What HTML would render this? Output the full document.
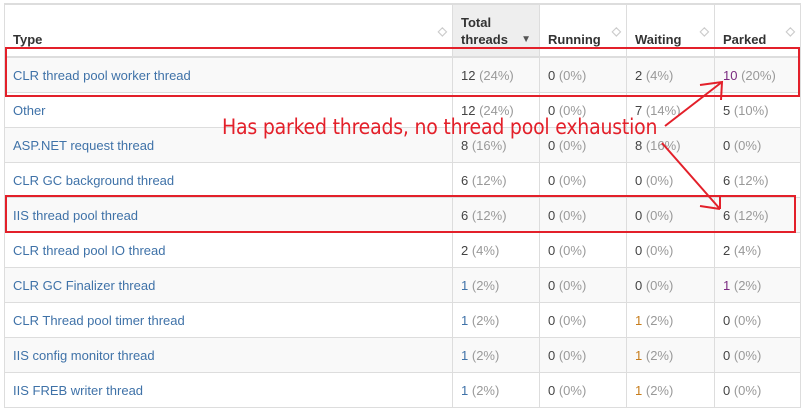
<!DOCTYPE html>
<html><head><style>
body{margin:0;width:807px;height:414px;background:#fff;font-family:"Liberation Sans",sans-serif;font-size:13px;position:relative;overflow:hidden}
table{position:absolute;left:4px;top:3px;border-collapse:collapse;width:797px;border:1px solid #ddd;border-top:2px solid #ddd}
th{height:43px;text-align:left;vertical-align:bottom;padding:0 8px 8px 8px;font-weight:bold;color:#333;border-left:1px solid #ddd;border-bottom:2px solid #ddd;background:#fff;position:relative;line-height:17px}
th.s{background:#eee}
th .ic{position:absolute;right:5px;top:22px;color:#ccc;font-size:12px;line-height:8px}
td{height:34px;padding:0 8px;border-left:1px solid #ddd;border-top:1px solid #ddd;color:#444}
tr.g td{background:#f9f9f9}
td a{color:#3f72a8}
.p{color:#999}
.b{color:#3f72a8}.o{color:#c77d1c}.v{color:#7a2b80}
.box{position:absolute;border:2px solid #e3202a}
.ann{position:absolute;left:222px;top:115px;color:#e3202a;font-size:21px;font-family:"DejaVu Sans Condensed","Liberation Sans",sans-serif;letter-spacing:-0.2px}
</style></head><body>
<table>
<tr><th style="width:431px;border-left:none">Type<span class="ic">◇</span></th><th class="s" style="width:70px">Total<br>threads<span style="position:absolute;right:8px;top:26px;color:#555;font-size:10px">▼</span></th><th style="width:70px">Running<span class="ic">◇</span></th><th style="width:71px">Waiting<span class="ic">◇</span></th><th>Parked<span class="ic">◇</span></th></tr>
<tr class="g"><td style="border-left:none"><a>CLR thread pool worker thread</a></td><td>12 <span class="p">(24%)</span></td><td>0 <span class="p">(0%)</span></td><td>2 <span class="p">(4%)</span></td><td><span class="v">10</span> <span class="p">(20%)</span></td></tr>
<tr><td style="border-left:none"><a>Other</a></td><td>12 <span class="p">(24%)</span></td><td>0 <span class="p">(0%)</span></td><td>7 <span class="p">(14%)</span></td><td>5 <span class="p">(10%)</span></td></tr>
<tr class="g"><td style="border-left:none"><a>ASP.NET request thread</a></td><td>8 <span class="p">(16%)</span></td><td>0 <span class="p">(0%)</span></td><td>8 <span class="p">(16%)</span></td><td>0 <span class="p">(0%)</span></td></tr>
<tr><td style="border-left:none"><a>CLR GC background thread</a></td><td>6 <span class="p">(12%)</span></td><td>0 <span class="p">(0%)</span></td><td>0 <span class="p">(0%)</span></td><td>6 <span class="p">(12%)</span></td></tr>
<tr class="g"><td style="border-left:none"><a>IIS thread pool thread</a></td><td>6 <span class="p">(12%)</span></td><td>0 <span class="p">(0%)</span></td><td>0 <span class="p">(0%)</span></td><td>6 <span class="p">(12%)</span></td></tr>
<tr><td style="border-left:none"><a>CLR thread pool IO thread</a></td><td>2 <span class="p">(4%)</span></td><td>0 <span class="p">(0%)</span></td><td>0 <span class="p">(0%)</span></td><td>2 <span class="p">(4%)</span></td></tr>
<tr class="g"><td style="border-left:none"><a>CLR GC Finalizer thread</a></td><td><span class="b">1</span> <span class="p">(2%)</span></td><td>0 <span class="p">(0%)</span></td><td>0 <span class="p">(0%)</span></td><td><span class="v">1</span> <span class="p">(2%)</span></td></tr>
<tr><td style="border-left:none"><a>CLR Thread pool timer thread</a></td><td><span class="b">1</span> <span class="p">(2%)</span></td><td>0 <span class="p">(0%)</span></td><td><span class="o">1</span> <span class="p">(2%)</span></td><td>0 <span class="p">(0%)</span></td></tr>
<tr class="g"><td style="border-left:none"><a>IIS config monitor thread</a></td><td><span class="b">1</span> <span class="p">(2%)</span></td><td>0 <span class="p">(0%)</span></td><td><span class="o">1</span> <span class="p">(2%)</span></td><td>0 <span class="p">(0%)</span></td></tr>
<tr><td style="border-left:none"><a>IIS FREB writer thread</a></td><td><span class="b">1</span> <span class="p">(2%)</span></td><td>0 <span class="p">(0%)</span></td><td><span class="o">1</span> <span class="p">(2%)</span></td><td>0 <span class="p">(0%)</span></td></tr>
</table>
<div class="box" style="left:5px;top:47px;width:791px;height:46px"></div>
<div class="box" style="left:5px;top:195px;width:787px;height:34px"></div>
<div class="ann">Has parked threads, no thread pool exhaustion</div>
<svg style="position:absolute;left:0;top:0" width="807" height="414"><g stroke="#e3202a" stroke-width="2" fill="none">
<path d="M665 126 L722 82 M700 85 L722 82 L721 100"/>
<path d="M662 143 L720 209 M720 196 L720 209 M700 206 L720 209"/></g></svg>
</body></html>
